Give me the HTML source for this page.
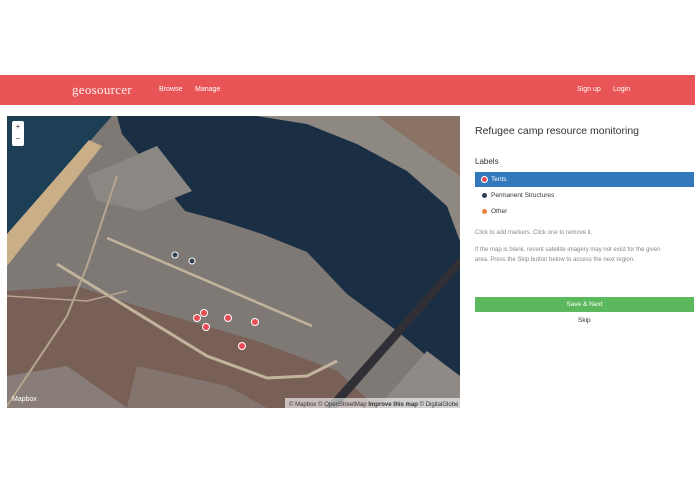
<!DOCTYPE html>
<html><head><meta charset="utf-8"><style>
body{margin:0;width:695px;height:494px;background:#fff;font-family:"Liberation Sans",sans-serif;position:relative;overflow:hidden}
.nav{position:absolute;top:75px;left:0;width:695px;height:30px;background:#e95556;color:#fff}
.nav span{position:absolute;font-size:7px;top:11px}
.logo{font-family:"Liberation Serif",serif;font-size:13px!important;top:7px!important;left:72px;letter-spacing:.3px;opacity:.9}
.map{position:absolute;left:7px;top:116px;width:453px;height:292px;overflow:hidden}
.zoom{position:absolute;left:5px;top:5px;width:12px;height:25px;background:#fff;border-radius:2px;font-size:8px;color:#333;text-align:center;line-height:12px}
h1{position:absolute;left:475px;top:125px;margin:0;font-weight:normal;font-size:10.5px;color:#333;white-space:nowrap}
.t{position:absolute;font-size:6.5px;color:#333;white-space:nowrap}
.g{color:#888}
</style></head><body>
<div class="nav"><span class="logo">geosourcer</span><span style="left:159px">Browse</span><span style="left:195px">Manage</span><span style="left:577px">Sign up</span><span style="left:613px">Login</span></div>
<div class="map">
<svg width="453" height="292" viewBox="0 0 453 292">
<rect width="453" height="292" fill="#7f7975"/>
<polygon points="0,0 105,0 0,120" fill="#1d3f55"/>
<polygon points="0,150 95,30 82,24 0,118" fill="#c9ae88"/>
<polygon points="110,0 250,0 300,8 350,28 400,55 440,90 453,125 453,260 420,240 390,215 340,178 300,136 255,118 215,105 178,95 140,48 115,18" fill="#1a2e44"/>
<polygon points="250,0 453,0 453,125 440,90 400,55 350,28 300,8" fill="#8e8883"/>
<polygon points="370,0 453,0 453,60 425,40" fill="#8a7264"/>
<polygon points="0,175 70,170 130,190 250,225 330,255 370,292 0,292" fill="#76584d" opacity=".75"/>
<polygon points="0,260 60,250 120,292 0,292" fill="#8e8a86" opacity=".7"/>
<polygon points="130,250 220,270 260,292 120,292" fill="#8e8a86" opacity=".5"/>
<polygon points="80,60 150,30 185,75 135,95 90,85" fill="#8b8783"/>
<polyline points="50,148 200,240 260,262 300,260 330,245" fill="none" stroke="#c2b39c" stroke-width="3"/>
<polyline points="100,122 305,210" fill="none" stroke="#c2b39c" stroke-width="2.5"/>
<polyline points="0,290 60,200 80,150 110,60" fill="none" stroke="#b5a58f" stroke-width="2"/>
<polyline points="0,180 80,185 120,175" fill="none" stroke="#b5a58f" stroke-width="1.5"/>
<polygon points="453,140 453,152 330,292 318,292" fill="#2f2f35"/>
<polygon points="420,235 453,260 453,292 370,292" fill="#8f8a85"/>
<g fill="#e74c52" stroke="#fff" stroke-width="1"><circle cx="190" cy="202" r="3.5"/><circle cx="197" cy="197" r="3.5"/><circle cx="199" cy="211" r="3.5"/><circle cx="221" cy="202" r="3.5"/><circle cx="248" cy="206" r="3.5"/><circle cx="235" cy="230" r="3.5"/></g>
<g fill="#2c3e50" stroke="#fff" stroke-width="1"><circle cx="168" cy="139" r="3"/><circle cx="185" cy="145" r="3"/></g>
<rect x="278" y="282" width="175" height="10" fill="#fff" opacity=".6"/>
<text x="282" y="290" font-size="6" fill="#333" font-family="Liberation Sans">© Mapbox © OpenStreetMap <tspan font-weight="bold">Improve this map</tspan> © DigitalGlobe</text>
<text x="5" y="285" font-size="7" fill="#fff" font-family="Liberation Sans">Mapbox</text>
</svg>
<div class="zoom">+<br>−</div>
</div>
<h1>Refugee camp resource monitoring</h1>
<div class="t" style="left:475px;top:157px;font-size:8px">Labels</div>
<div style="position:absolute;left:475px;top:172px;width:219px;height:15px;background:#3378bb"></div>
<div style="position:absolute;left:481px;top:176px;width:5px;height:5px;border-radius:50%;background:#e74c52;border:1px solid #fff"></div>
<div class="t" style="left:491px;top:176px;color:#fff">Tents</div>
<div style="position:absolute;left:482px;top:193px;width:5px;height:5px;border-radius:50%;background:#2c3e50"></div>
<div class="t" style="left:491px;top:192px">Permanent Structures</div>
<div style="position:absolute;left:482px;top:209px;width:5px;height:5px;border-radius:50%;background:#e8823e"></div>
<div class="t" style="left:491px;top:208px">Other</div>
<div class="t g" style="left:475px;top:230px;font-size:6px">Click to add markers. Click one to remove it.</div>
<div class="t g" style="left:475px;top:245px;font-size:6px;line-height:10px">If the map is blank, recent satellite imagery may not exist for the given<br>area. Press the Skip button below to access the next region.</div>
<div style="position:absolute;left:475px;top:297px;width:219px;height:15px;background:#5cb85c;color:#fff;font-size:6.5px;text-align:center;line-height:15px">Save &amp; Next</div>
<div class="t" style="left:578px;top:317px">Skip</div>
</body></html>
